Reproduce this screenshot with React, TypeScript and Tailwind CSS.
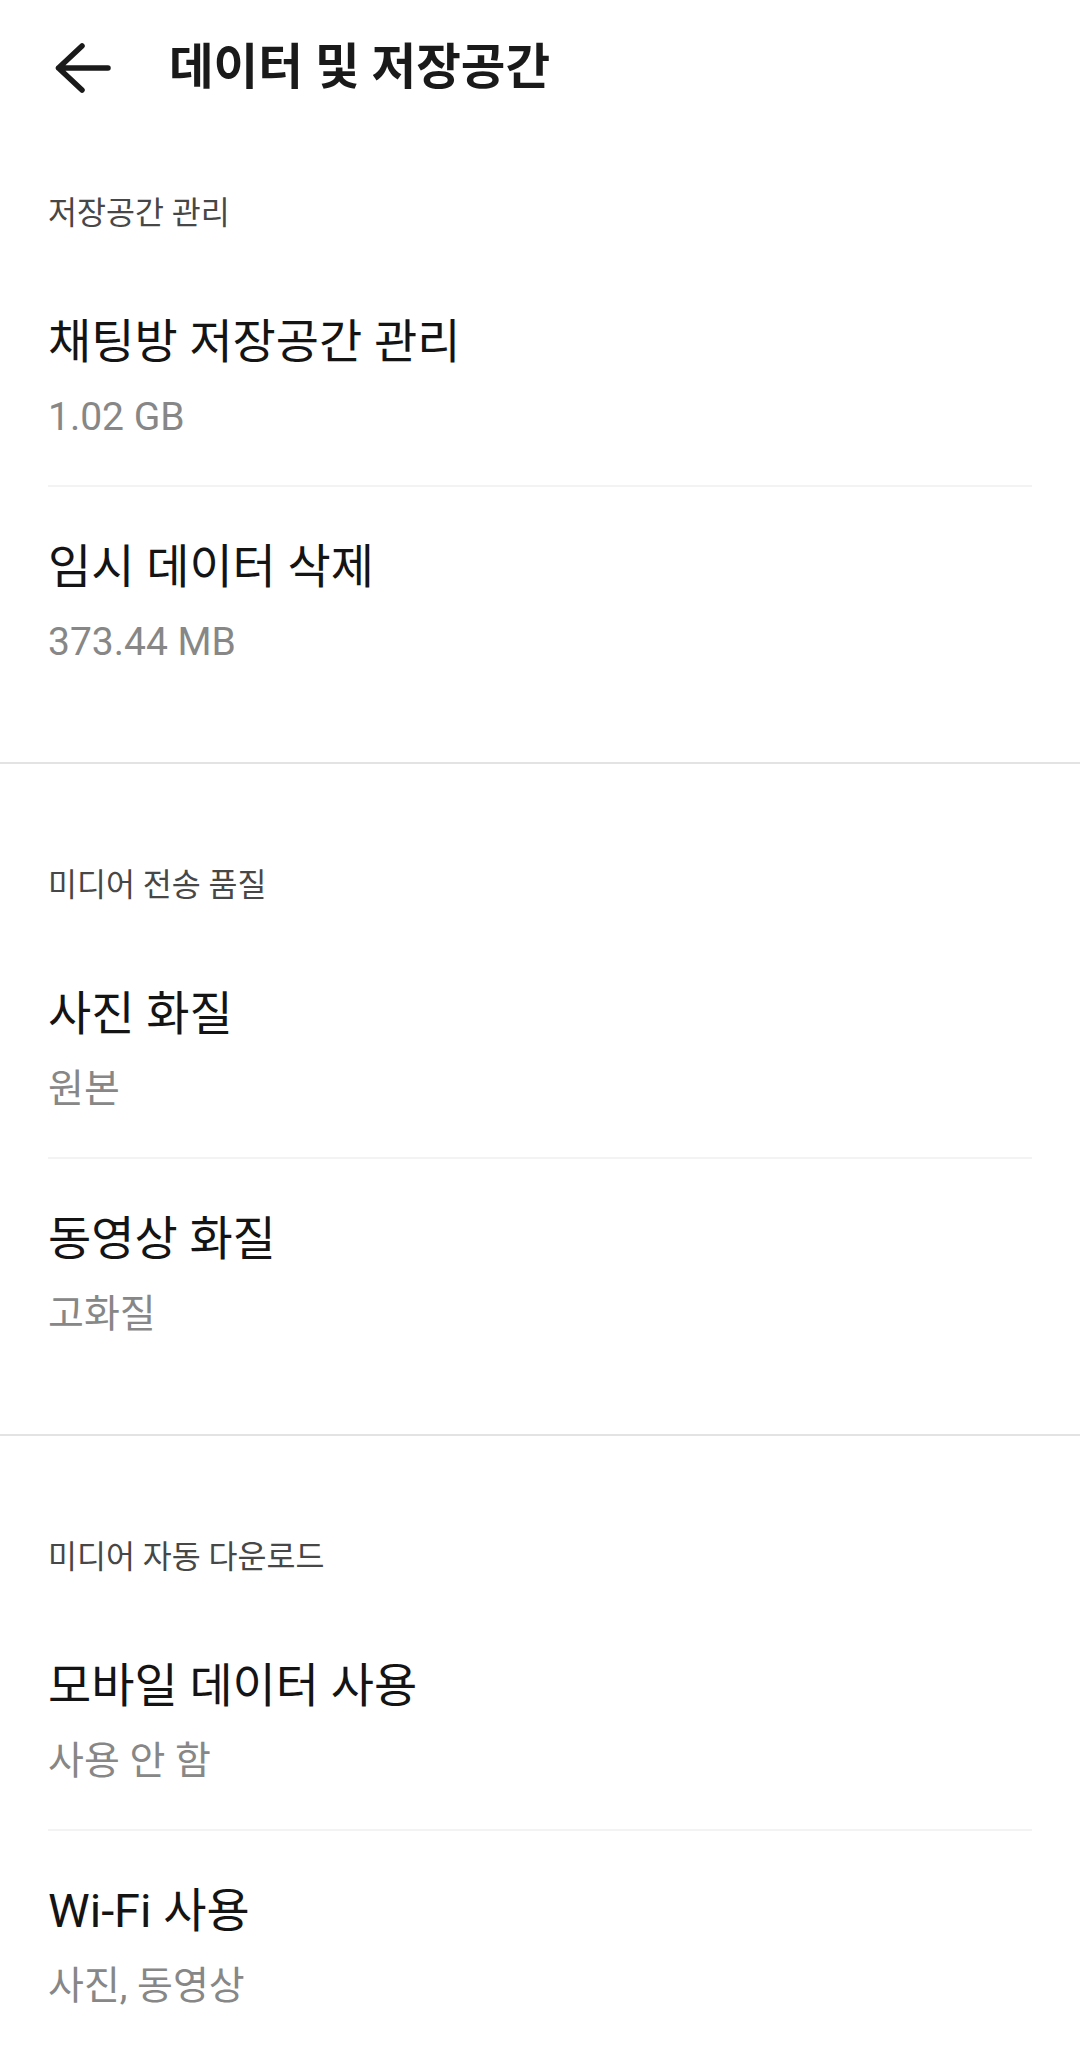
import React from 'react';

type Item = { title: string; value: string };
type Section = { header: string; items: Item[] };

const sections: Section[] = [
  {
    header: '저장공간 관리',
    items: [
      { title: '채팅방 저장공간 관리', value: '1.02 GB' },
      { title: '임시 데이터 삭제', value: '373.44 MB' },
    ],
  },
  {
    header: '미디어 전송 품질',
    items: [
      { title: '사진 화질', value: '원본' },
      { title: '동영상 화질', value: '고화질' },
    ],
  },
  {
    header: '미디어 자동 다운로드',
    items: [
      { title: '모바일 데이터 사용', value: '사용 안 함' },
      { title: 'Wi-Fi 사용', value: '사진, 동영상' },
    ],
  },
];

function BackArrow() {
  return (
    <svg width="56" height="52" viewBox="0 0 56 52" fill="none">
      <path
        d="M53 26H3.5M27 4L3.5 26L27 48"
        stroke="#1a1a1a"
        strokeWidth="5.5"
        strokeLinecap="round"
        strokeLinejoin="round"
      />
    </svg>
  );
}

function SettingRow({ item, divider }: { item: Item; divider: boolean }) {
  return (
    <div className={divider ? 'border-t-2 border-[#f3f3f3]' : ''}>
      <div className="pt-[52px] pb-[44px]">
        <div className="text-[47px] leading-[56px] text-[#141414]">{item.title}</div>
        <div className="mt-[23px] text-[39px] leading-[48px] text-[#878787]">{item.value}</div>
      </div>
    </div>
  );
}

export default function App() {
  return (
    <div
      className="min-h-screen w-full bg-white"
      style={{ fontFamily: 'Roboto, "Noto Sans CJK KR", sans-serif' }}
    >
      {/* Toolbar */}
      <div className="flex h-[136px] items-center pl-[55px]">
        <BackArrow />
        <h1 className="ml-[58px] text-[48.5px] font-bold leading-none text-[#1a1a1a]">
          데이터 및 저장공간
        </h1>
      </div>

      {sections.map((section, i) => (
        <div key={section.header} className={i > 0 ? 'border-t-2 border-[#e3e3e3]' : ''}>
          <div className={`px-[48px] pb-[52px] ${i === 0 ? 'pt-[58px]' : 'pt-[102px]'}`}>
            <div className="pb-[28px] text-[31.5px] leading-[40px] text-[#474747]">{section.header}</div>
            {section.items.map((item, j) => (
              <SettingRow key={item.title} item={item} divider={j > 0} />
            ))}
          </div>
        </div>
      ))}
    </div>
  );
}
